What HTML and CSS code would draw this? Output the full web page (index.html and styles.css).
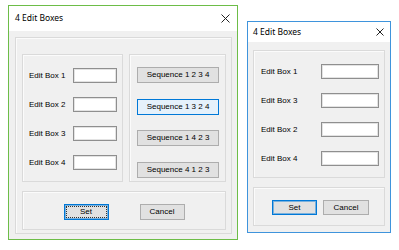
FILE: index.html
```html
<!DOCTYPE html>
<html>
<head>
<meta charset="utf-8">
<link rel="stylesheet" href="styles.css">
</head>
<body>
<div class="desk">
  <div class="win win-green">
    <div class="titlebar tb-large">
      <span class="title">4 Edit Boxes</span>
      <svg class="close" width="9" height="9" viewBox="0 0 9 9"><path d="M0.5 0.5L8.5 8.5M8.5 0.5L0.5 8.5" stroke="#222" stroke-width="1"/></svg>
    </div>
    <div class="wbody wbody-large">
      <div class="panel big-panel">
        <div class="groups">
          <div class="group edit-group">
            <div class="row"><span class="lbl">Edit Box 1</span><span class="edit edit-s"></span></div>
            <div class="row"><span class="lbl">Edit Box 2</span><span class="edit edit-s"></span></div>
            <div class="row"><span class="lbl">Edit Box 3</span><span class="edit edit-s"></span></div>
            <div class="row"><span class="lbl">Edit Box 4</span><span class="edit edit-s"></span></div>
          </div>
          <div class="group seq-group">
            <button class="btn seq">Sequence 1 2 3 4</button>
            <button class="btn seq hot">Sequence 1 3 2 4</button>
            <button class="btn seq">Sequence 1 4 2 3</button>
            <button class="btn seq">Sequence 4 1 2 3</button>
          </div>
        </div>
        <div class="group btn-group">
          <button class="btn act default focus">Set</button>
          <button class="btn act">Cancel</button>
        </div>
      </div>
    </div>
  </div>

  <div class="win win-blue">
    <div class="titlebar tb-small">
      <span class="title">4 Edit Boxes</span>
      <svg class="close" width="8" height="8" viewBox="0 0 8 8"><path d="M0.5 0.5L7.5 7.5M7.5 0.5L0.5 7.5" stroke="#222" stroke-width="1"/></svg>
    </div>
    <div class="wbody wbody-small">
      <div class="panel edit-panel">
        <div class="row"><span class="lbl">Edit Box 1</span><span class="edit edit-l"></span></div>
        <div class="row"><span class="lbl">Edit Box 3</span><span class="edit edit-l"></span></div>
        <div class="row"><span class="lbl">Edit Box 2</span><span class="edit edit-l"></span></div>
        <div class="row"><span class="lbl">Edit Box 4</span><span class="edit edit-l"></span></div>
      </div>
      <div class="panel small-btn-panel">
        <button class="btn act2 default">Set</button>
        <button class="btn act2 wide">Cancel</button>
      </div>
    </div>
  </div>
</div>
</body>
</html>
```

FILE: styles.css
```css
html, body {
  margin: 0;
  padding: 0;
  background: #ffffff;
}

.desk {
  display: flex;
  align-items: flex-start;
  padding: 5px 0 0 8px;
  gap: 9px;
}

.win {
  box-sizing: border-box;
  display: flex;
  flex-direction: column;
  background: #f0f0f0;
}

.win-green {
  width: 230px;
  height: 235px;
  border: 1px solid #6dbd48;
}

.win-blue {
  width: 144px;
  height: 212px;
  margin-top: 16px;
  border: 1px solid #3f94dc;
}

.titlebar {
  background: #ffffff;
  display: flex;
  align-items: center;
  justify-content: space-between;
  flex: none;
}

.tb-large {
  height: 25px;
  padding: 0 7px 0 6px;
}

.tb-small {
  height: 20px;
  padding: 0 6px 0 5px;
}

.title {
  font-family: "Noto Sans", "Open Sans", sans-serif;
  font-size: 8.5px;
  color: #000;
  line-height: 1;
}

.close {
  display: block;
}

.wbody {
  display: flex;
  flex-direction: column;
  flex: 1;
}

.wbody-large {
  padding: 6px 5px 5px 6px;
}

.wbody-small {
  padding: 8px 5px 6px 5px;
  gap: 9px;
}

.panel, .group {
  box-sizing: border-box;
  border: 1px solid #dadada;
  box-shadow: inset 1px 1px 0 #fbfbfb;
}

.big-panel {
  flex: 1;
  display: flex;
  flex-direction: column;
  padding: 16px 5px 3px 6px;
  gap: 9px;
}

.groups {
  display: flex;
  gap: 6px;
  height: 128px;
}

.edit-group {
  width: 101px;
  display: flex;
  flex-direction: column;
  padding: 13px 5px 0 6px;
  gap: 14px;
}

.seq-group {
  width: 97px;
  display: flex;
  flex-direction: column;
  padding: 12px 0 0 7px;
  gap: 15.67px;
}

.row {
  display: flex;
  align-items: center;
  justify-content: space-between;
  height: 15px;
}

.lbl {
  font-family: "Liberation Sans", Arial, sans-serif;
  font-size: 8px;
  color: #000;
  line-height: 1;
}

.edit {
  box-sizing: border-box;
  display: block;
  height: 15px;
  background: #fff;
  border: 1px solid #8f8f8f;
  box-shadow: inset 0 0 0 1px #e3e3e3;
}

.edit-s {
  width: 44px;
}

.edit-l {
  width: 58px;
}

.btn {
  box-sizing: border-box;
  margin: 0;
  padding: 0;
  background: #e1e1e1;
  border: 1px solid #adadad;
  font-family: "Liberation Sans", Arial, sans-serif;
  font-size: 8px;
  color: #000;
  line-height: 1;
  text-align: center;
}

.seq {
  width: 82px;
  height: 16px;
}

.seq.hot {
  background: #e5f1fb;
  border-color: #0078d7;
}

.btn-group {
  height: 39px;
  display: flex;
  justify-content: center;
  align-items: flex-start;
  padding-top: 12px;
  gap: 31px;
}

.act {
  width: 45px;
  height: 16px;
}

.default {
  border-color: #0078d7;
  box-shadow: inset 0 0 0 1px rgba(0, 120, 215, 0.45);
}

.focus {
  outline: 1px dotted #333;
  outline-offset: -3px;
}

.edit-panel {
  height: 128px;
  display: flex;
  flex-direction: column;
  padding: 13px 5px 0 7px;
  gap: 14px;
}

.small-btn-panel {
  height: 39px;
  display: flex;
  align-items: flex-start;
  padding: 12px 0 0 18px;
  gap: 6px;
}

.act2 {
  width: 45px;
  height: 15px;
}

.act2.wide {
  width: 46px;
}
```
